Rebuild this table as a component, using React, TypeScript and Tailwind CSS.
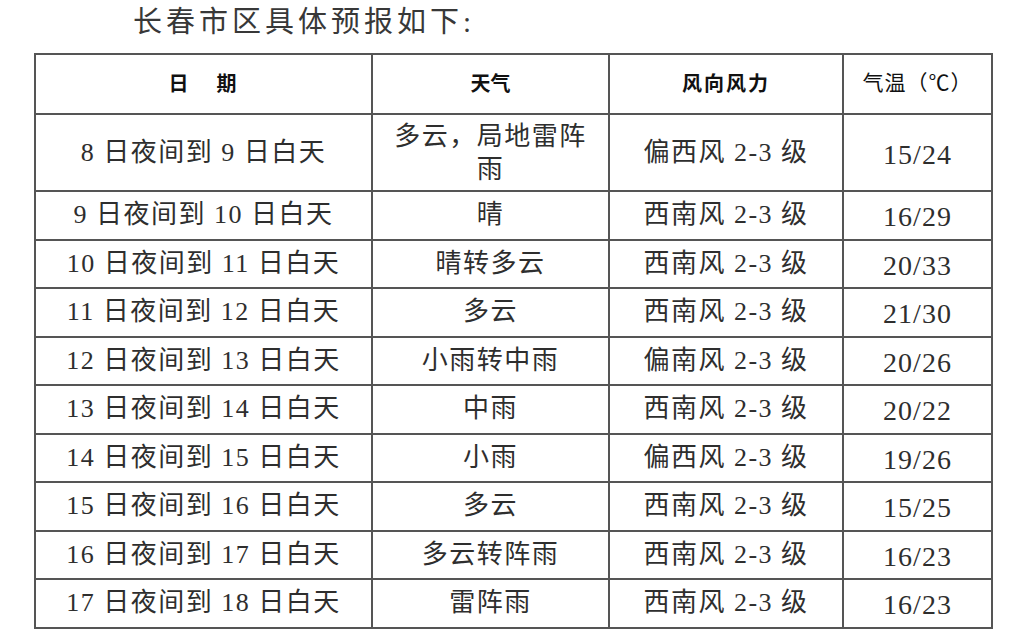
const rows: [string, string, string, string][] = [
  ["9 日夜间到 10 日白天", "晴", "西南风 2-3 级", "16/29"],
  ["10 日夜间到 11 日白天", "晴转多云", "西南风 2-3 级", "20/33"],
  ["11 日夜间到 12 日白天", "多云", "西南风 2-3 级", "21/30"],
  ["12 日夜间到 13 日白天", "小雨转中雨", "偏南风 2-3 级", "20/26"],
  ["13 日夜间到 14 日白天", "中雨", "西南风 2-3 级", "20/22"],
  ["14 日夜间到 15 日白天", "小雨", "偏西风 2-3 级", "19/26"],
  ["15 日夜间到 16 日白天", "多云", "西南风 2-3 级", "15/25"],
  ["16 日夜间到 17 日白天", "多云转阵雨", "西南风 2-3 级", "16/23"],
  ["17 日夜间到 18 日白天", "雷阵雨", "西南风 2-3 级", "16/23"],
]

const font = { fontFamily: '"Liberation Serif", "Noto Sans CJK SC", serif' }

export default function App() {
  return (
    <div className="w-[1025px] h-[637px] bg-white overflow-hidden text-[#2e2e2e]" style={font}>
      {/* Title */}
      <div className="pl-[133px] pt-[2px] h-[53px] text-[29px] leading-[40px] tracking-[4px] text-[#383838]">
        长春市区具体预报如下:
      </div>

      <table className="ml-[34px] border-collapse table-fixed w-[957px] text-center">
        <colgroup>
          <col className="w-[337px]" />
          <col className="w-[237px]" />
          <col className="w-[234px]" />
          <col className="w-[149px]" />
        </colgroup>
        <thead>
          <tr className="h-[60px] text-[20px] font-bold text-[#111]">
            <th className="border-2 border-[#555] tracking-[2px]">
              日<span className="inline-block w-[26px]" />期
            </th>
            <th className="border-2 border-[#555]">天气</th>
            <th className="border-2 border-[#555] tracking-[2px]">风向风力</th>
            <th className="border-2 border-[#555] font-normal text-[21px] tracking-[1px]">气温（℃）</th>
          </tr>
        </thead>
        <tbody className="text-[26px] tracking-[1.5px]">
          <tr className="h-[77px]">
            <td className="border-2 border-[#555]">8 日夜间到 9 日白天</td>
            <td className="border-2 border-[#555] leading-[33px]">
              多云，局地雷阵
              <br />雨
            </td>
            <td className="border-2 border-[#555]">偏西风 2-3 级</td>
            <td className="border-2 border-[#555] pt-[4px] text-[28px] tracking-[1px]">15/24</td>
          </tr>
          {rows.map((r, i) => (
            <tr key={i} className="h-[48.5px]">
              <td className="border-2 border-[#555] leading-[30px]">{r[0]}</td>
              <td className="border-2 border-[#555] leading-[30px]">{r[1]}</td>
              <td className="border-2 border-[#555] leading-[30px]">{r[2]}</td>
              <td className="border-2 border-[#555] leading-[30px] pt-[4px] text-[28px] tracking-[1px]">{r[3]}</td>
            </tr>
          ))}
        </tbody>
      </table>
    </div>
  )
}
